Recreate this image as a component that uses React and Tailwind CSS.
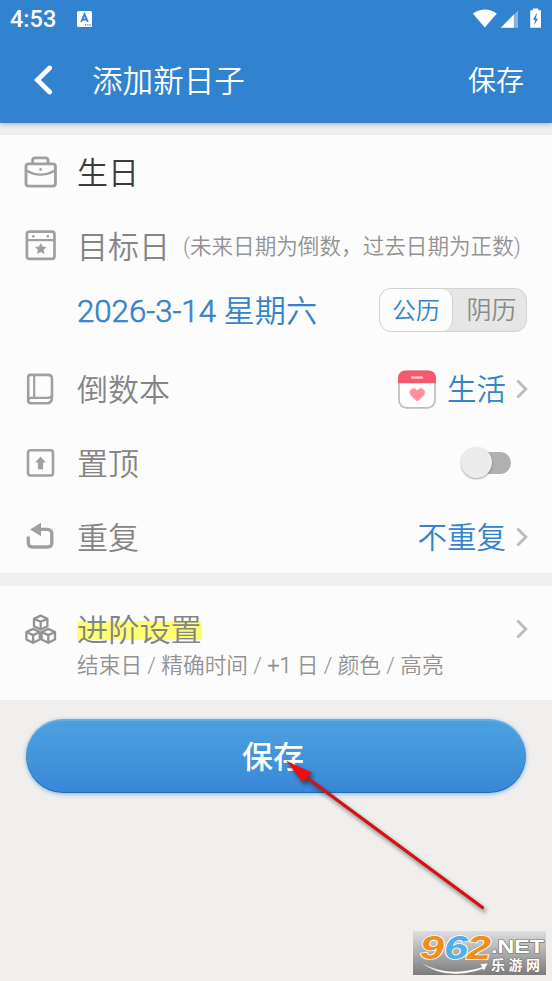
import { useState } from "react";
import clsx from "clsx";

const iconProps = {
  className: "shrink-0",
  fill: "none",
  stroke: "#a0a0a0",
  strokeWidth: 2.9,
  strokeLinejoin: "round",
};

function BriefcaseIcon() {
  return (
    <svg width="33" height="32" viewBox="0 0 33 32" {...iconProps}>
      <path d="M8.6 7V4.4Q8.6 1.9 11.2 1.9H21.4Q24 1.9 24 4.4V7" />
      <rect x="2" y="7.9" width="29.4" height="22.2" rx="2.6" />
      <path d="M2 14.2Q9 18.6 16.6 18.6T31.2 14.2" strokeWidth="2.2" />
      <circle cx="16.6" cy="13.4" r="1.3" fill="#a0a0a0" stroke="none" />
    </svg>
  );
}

function CalendarIcon() {
  return (
    <svg width="33" height="32" viewBox="0 0 33 32" {...iconProps}>
      <rect x="2.9" y="1.6" width="27.6" height="27.2" rx="2.6" strokeWidth="2.7" />
      <path d="M2.4 10.1H31" strokeWidth="2.2" />
      <circle cx="9.4" cy="6.3" r="1.3" fill="#a0a0a0" stroke="none" />
      <circle cx="23.8" cy="6.3" r="1.3" fill="#a0a0a0" stroke="none" />
      <path
        d="M16.8 12.9l1.8 3.6 4 .5-2.9 2.8.8 4.1-3.7-2-3.7 2 .8-4.1-2.9-2.8 4-.5z"
        fill="#a0a0a0"
        stroke="none"
      />
    </svg>
  );
}

function BookIcon() {
  return (
    <svg width="33" height="32" viewBox="0 0 33 32" {...iconProps} strokeWidth="2.6">
      <path d="M6.4 1.9H23.9Q28 1.9 28 6V24.4Q28 30.2 22.6 30.2H6.8Q4.2 30.2 4.2 27.6V4.1Q4.2 1.9 6.4 1.9Z" />
      <path d="M10.2 2V24.6M4.2 27.4Q4.2 24.8 6.8 24.8H24Q27.4 24.8 28 22" strokeWidth="2.2" />
    </svg>
  );
}

function PinTopIcon() {
  return (
    <svg width="33" height="32" viewBox="0 0 33 32" {...iconProps} strokeWidth="2.6">
      <rect x="4" y="3.3" width="25" height="25.2" rx="2.2" />
      <path d="M16.5 9.6L21.8 15.6H19.1V22.2H13.9V15.6H11.2Z" fill="#a0a0a0" stroke="none" />
    </svg>
  );
}

function RepeatIcon() {
  return (
    <svg width="33" height="32" viewBox="0 0 33 32" {...iconProps} strokeWidth="3.4">
      <path d="M4.3 15.6V21.8Q4.3 26 8.5 26H23.6Q27.8 26 27.8 21.8V13Q27.8 8.4 23.6 8.4H15" />
      <path d="M17 1.8V15.2L6 8.5Z" fill="#a0a0a0" stroke="none" />
    </svg>
  );
}

function Cube({ x, y }) {
  return (
    <path
      transform={`translate(${x} ${y})`}
      d="M0 -7L6.7 -3.9V3.6L0 6.9L-6.7 3.6V-3.9ZM-6.7 -3.9L0 -.8L6.7 -3.9M0 -.8V6.9"
    />
  );
}

function CubesIcon() {
  return (
    <svg width="33" height="32" viewBox="0 0 33 32" {...iconProps} stroke="#939393" strokeWidth="2.3">
      <Cube x={16.7} y={9.6} />
      <Cube x={9.1} y={22.9} />
      <Cube x={24.3} y={22.9} />
    </svg>
  );
}

function LifeIcon() {
  return (
    <svg width="38" height="39" viewBox="0 0 38 39">
      <rect x="1" y="1.4" width="36" height="36.4" rx="7.5" fill="#fff" stroke="#bdbdbd" strokeWidth="1.7" />
      <path d="M0 13.2V8.4Q0 .4 8 .4H30Q38 .4 38 8.4V13.2Z" fill="#f5596d" />
      <path d="M14 7.5H24" stroke="#ffc4cb" strokeWidth="2.4" strokeLinecap="round" />
      <path
        d="M19.3 31.6L13 25.8Q10.6 23 12.4 20.1Q15.6 16.6 19.3 20.2Q23 16.6 26.2 20.1Q28 23 25.6 25.8Z"
        fill="#ff8f9f"
      />
    </svg>
  );
}

function Chevron() {
  return (
    <svg className="shrink-0" width="12" height="20" viewBox="0 0 12 20" fill="none" stroke="#bcbcbc" strokeWidth="2.9">
      <path d="M1.4 1.4L9.8 10L1.4 18.6" />
    </svg>
  );
}

function StatusBar() {
  return (
    <div className="flex h-[38px] items-center pl-[10px] pr-[10px] text-white">
      <span className="pt-px text-[23.5px] font-medium leading-none">4:53</span>
      <svg className="ml-[21px]" width="15" height="17" viewBox="0 0 15 17">
        <rect x="0" y="0" width="15" height="16" rx="1.6" fill="#fff" />
        <path d="M4.2 11L7.5 3.1L10.8 11M5.4 8.5H9.6" fill="none" stroke="#3183cf" strokeWidth="1.9" />
        <path d="M8 13.9H14" stroke="#3183cf" strokeWidth="1.2" strokeDasharray="1.2 1" />
      </svg>
      <svg className="ml-auto" width="70" height="22" viewBox="0 0 70 22" fill="#fff">
        <path d="M.8 5.5Q12.8 -2.4 24.8 5.5L12.8 19.6Z" />
        <path d="M46 2.4V19.8H28.8Z" opacity=".4" />
        <path d="M41.8 6.6V19.8H28.8Z" />
        <path d="M58.2 2.2H60.9V.4H66.3V2.2H69V19.8H58.2Z" />
        <path d="M64.4 5.4L61 11.7H63L62.3 17.2L66 10.4H63.8L65 5.4Z" fill="#3183cf" />
      </svg>
    </div>
  );
}

function Row({ icon, label, dark, children }) {
  return (
    <div className="flex h-[73.7px] items-center pl-[24px] pr-[24px]">
      {icon}
      <span
        className={clsx(
          "ml-[20px] pt-[3px] text-[31px] leading-none",
          dark ? "text-[#3c3c3c]" : "text-[#858585]"
        )}
      >
        {label}
      </span>
      {children}
    </div>
  );
}

function CalendarSwitch({ lunar, onChange }) {
  return (
    <div className="mt-px flex h-[44px] w-[148px] overflow-hidden rounded-[12px] border border-[#d2d2d2] bg-[#e6e6e6] text-[24px] leading-none">
      <button
        onClick={() => onChange(false)}
        className={clsx(
          "w-[73px] rounded-[11px] pt-[3px]",
          lunar ? "text-[#8a8a8a]" : "border-r border-[#d2d2d2] bg-[#fcfcfc] text-[#3583ca]"
        )}
      >
        公历
      </button>
      <button
        onClick={() => onChange(true)}
        className={clsx(
          "flex-1 rounded-[11px] pl-1 pt-px text-[25px]",
          lunar ? "bg-[#fcfcfc] text-[#3583ca]" : "text-[#8a8a8a]"
        )}
      >
        阴历
      </button>
    </div>
  );
}

function Watermark() {
  return (
    <svg className="absolute left-[413px] top-[931px] overflow-visible" width="134" height="45" viewBox="0 0 134 45">
      <defs>
        <linearGradient id="plate" x1="0" y1="0" x2="0" y2="1">
          <stop offset="0" stopColor="#dedede" />
          <stop offset="1" stopColor="#7c7c7c" />
        </linearGradient>
      </defs>
      <rect width="133" height="44" fill="url(#plate)" />
      <g
        fontFamily="'Liberation Sans', sans-serif"
        fontWeight="700"
        fontStyle="italic"
        fontSize="33"
        stroke="#fff"
        strokeWidth="1.6"
        paintOrder="stroke"
      >
        <text x="7" y="28" textLength="24" lengthAdjust="spacingAndGlyphs" fill="#f28c1c">9</text>
        <text x="31" y="28" textLength="24" lengthAdjust="spacingAndGlyphs" fill="#55aee5">6</text>
        <text x="54" y="28" textLength="24" lengthAdjust="spacingAndGlyphs" fill="#f28c1c">2</text>
      </g>
      <path d="M7 31Q34 47 69 36L67 33L75 32L71 40L70 38Q32 51 7 31Z" fill="#fff" stroke="#888" strokeWidth=".5" />
      <g fill="#fff" stroke="#777" strokeWidth="1.2" paintOrder="stroke" fontWeight="700">
        <text x="78" y="21.5" fontSize="18.5" textLength="53" lengthAdjust="spacingAndGlyphs" fontFamily="'Liberation Sans', sans-serif">.NET</text>
        <text x="78" y="39.3" fontSize="14" textLength="49" fontFamily="'Noto Sans CJK SC', sans-serif">乐游网</text>
      </g>
    </svg>
  );
}

function PointerArrow() {
  return (
    <svg
      className="pointer-events-none absolute left-[280px] top-[755px] drop-shadow-[2px_3px_2px_rgba(0,0,0,0.5)]"
      width="215"
      height="165"
      viewBox="280 755 215 165"
    >
      <path d="M306 777L482.5 907.5" stroke="#d01317" strokeWidth="3.4" strokeLinecap="round" />
      <path d="M287 761.5L312 773L306.5 776L303.5 782.5Z" fill="#fa0b0b" stroke="#c91b1b" strokeWidth=".7" />
    </svg>
  );
}

export default function App() {
  const [lunar, setLunar] = useState(false);
  const [pinned, setPinned] = useState(false);

  return (
    <div className="relative h-[981px] w-[552px] overflow-hidden bg-[#f0efed] font-[Roboto,'Noto_Sans_CJK_SC',sans-serif]">
      <header className="h-[123px] bg-[#3183cf] text-white shadow-[0_1px_5px_rgba(0,0,0,0.3)]">
        <StatusBar />
        <div className="flex h-[85px] items-center pl-[34px] pr-[28px] font-[350]">
          <svg className="mb-0.5" width="19" height="30" viewBox="0 0 19 30" fill="none" stroke="#fff" strokeWidth="4.8">
            <path d="M15.6 3L3.4 15L15.6 27" strokeLinecap="round" />
          </svg>
          <h1 className="ml-[39px] pt-[4px] text-[30.6px] leading-none">添加新日子</h1>
          <button className="ml-auto pt-0.5 text-[28px] leading-none">保存</button>
        </div>
      </header>

      <section className="mt-[12px] h-[438px] bg-[#fcfcfc] font-[350]">
        <Row icon={<BriefcaseIcon />} label="生日" dark />
        <Row icon={<CalendarIcon />} label="目标日">
          <span className="ml-[13px] whitespace-nowrap pt-[2px] text-[21.6px] leading-none text-[#929292]">
            (未来日期为倒数，过去日期为正数)
          </span>
        </Row>
        <div className="mb-[16px] flex h-[54px] items-center justify-between pl-[77px] pr-[25px]">
          <span className="pt-[5px] text-[31.2px] leading-none text-[#3583ca]">
            <span className="[-webkit-text-stroke:0.6px_#3583ca]">2026-3-14</span> 星期六
          </span>
          <CalendarSwitch lunar={lunar} onChange={setLunar} />
        </div>
        <Row icon={<BookIcon />} label="倒数本">
          <div className="ml-auto flex items-center">
            <LifeIcon />
            <span className="ml-[11px] mr-[10px] pt-[4px] text-[29.5px] leading-none text-[#3583ca]">生活</span>
            <Chevron />
          </div>
        </Row>
        <Row icon={<PinTopIcon />} label="置顶">
          <button
            onClick={() => setPinned(!pinned)}
            className="relative ml-auto mr-[17px] h-[22px] w-[46px] rounded-full bg-[#b0b0b0]"
          >
            <span
              className={clsx(
                "absolute top-[-5px] size-[31px] rounded-full bg-[#ececec] shadow-[0_1px_2px_rgba(0,0,0,0.35)]",
                pinned ? "right-[-4px]" : "left-[-4px]"
              )}
            />
          </button>
        </Row>
        <Row icon={<RepeatIcon />} label="重复">
          <div className="ml-auto flex items-center">
            <span className="mr-[10px] pt-[4px] text-[29.5px] leading-none text-[#3583ca]">不重复</span>
            <Chevron />
          </div>
        </Row>
      </section>

      <section className="mt-[13px] h-[114px] bg-[#fcfcfc] pl-[24px] pr-[24px] pt-[26px] font-[350]">
        <div className="flex h-[34px] items-center">
          <CubesIcon />
          <span className="ml-[20px] mt-[3px] bg-[linear-gradient(transparent_20%,#ffff73_20%,#ffff73_82%,transparent_82%)] text-[31.2px] leading-none text-[#858585]">
            进阶设置
          </span>
          <div className="ml-auto">
            <Chevron />
          </div>
        </div>
        <p className="ml-[53px] mt-[9px] text-[21.7px] leading-none text-[#929292]">
          结束日 / 精确时间 / <span className="[-webkit-text-stroke:0.4px_#929292]">+1</span> 日 / 颜色 / 高亮
        </p>
      </section>

      <button className="mx-[26px] mt-[19px] block h-[74px] w-[500px] rounded-full bg-linear-to-b from-[#4ca1df] to-[#3988d7] text-[31px] font-medium leading-none text-white shadow-[0_1px_4px_rgba(57,136,215,0.6),inset_0_2px_1px_rgba(255,255,255,0.15),inset_0_-1px_1px_rgba(0,60,120,0.4)]">
        <span className="relative -left-[3px] top-px">保存</span>
      </button>

      <PointerArrow />
      <Watermark />
    </div>
  );
}
